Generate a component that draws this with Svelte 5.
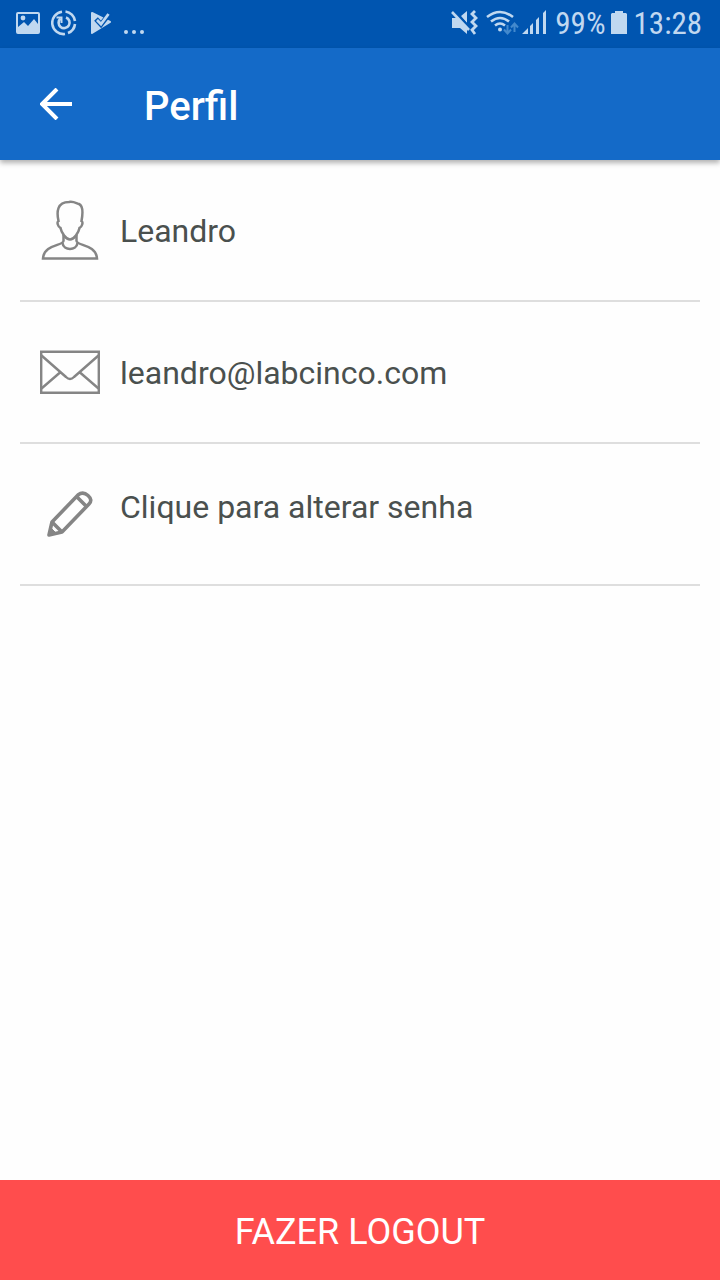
<script>
  let { name = 'Leandro', email = 'leandro@labcinco.com', battery = 99, time = '13:28', onback, onpassword, onlogout } = $props();
</script>

<div class="screen">
  <div class="status">
    <div class="group">
      <svg width="24" height="24" viewBox="0 0 24 24" fill="currentColor">
        <path fill-rule="evenodd" d="M2 1h20a2 2 0 0 1 2 2v18a2 2 0 0 1-2 2H2a2 2 0 0 1-2-2V3a2 2 0 0 1 2-2zM2 3v13l6-5 4 4 6-7 4 5V3z" />
        <circle cx="7" cy="7" r="2.400" />
      </svg>
      <svg width="26" height="26" viewBox="0 0 26 26" fill="none" stroke="currentColor" stroke-width="2.6">
        <path d="M14.500 1.500A11 11 0 0 1 24 11M24 14A11 11 0 0 1 17 23M14 24A11 11 0 0 1 11 1.700" />
        <path d="M15 7.500A5.500 5.500 0 1 1 9.500 8.500" />
        <path d="M5.500 7.500h5v5.500" stroke-width="2" />
      </svg>
      <svg class="play" width="22" height="24" viewBox="0 0 22 24">
        <path d="M1 2l18 9L1 22z" fill="currentColor" stroke="currentColor" stroke-width="2" stroke-linejoin="round" />
        <path d="M5 8l5 5.500L19 2" fill="none" stroke="#0055b0" stroke-width="5" />
        <path d="M6 9l4 4 7.500-10" fill="none" stroke="currentColor" stroke-width="2.8" />
      </svg>
      <svg class="more" width="22" height="24" viewBox="0 0 22 24" fill="currentColor">
        <circle cx="2" cy="20" r="2" /><circle cx="10" cy="20" r="2" /><circle cx="18" cy="20" r="2" />
      </svg>
    </div>
    <div class="group right">
      <svg width="28" height="26" viewBox="0 0 28 26" fill="currentColor">
        <path d="M1 8h5l10 10v6l-7-6H1zM10 6l6-5v12z" />
        <path d="M3 2l16 17" fill="none" stroke="#0055b0" stroke-width="4" />
        <path d="M1 2l17 18" fill="none" stroke="currentColor" stroke-width="2.6" />
        <path d="M24 1l-3 3 4 4-4 4 4 4-4 4 3 4" fill="none" stroke="currentColor" stroke-width="2.8" />
      </svg>
      <svg class="wifi" width="33" height="26" viewBox="0 0 33 26" fill="none" stroke="currentColor" stroke-width="2.6">
        <path d="M1 7q13-10 26 0M5 11.500q9-7 18 0M9 15.500q5-4 10 0" />
        <circle cx="14" cy="19.500" r="2" fill="currentColor" stroke="none" />
        <path d="M21.500 15v8M18 19.500l3.500 4 3.500-4M28.500 22v-8M25 17.500l3.500-4 3.500 4" stroke="#4389cd" stroke-width="2" />
      </svg>
      <svg width="26" height="26" viewBox="0 0 26 26" fill="currentColor">
        <path d="M0 24l6-6v6zM8 16l3-3v11H8zM14 10l3-3v17h-3zM21 3l3-3v24h-3z" />
      </svg>
      <span>{battery}%</span>
      <svg class="battery" width="16" height="24" viewBox="0 0 16 24" fill="currentColor">
        <path d="M4 0h8v2h3l1 1v20H0V3l1-1h3z" />
      </svg>
      <span>{time}</span>
    </div>
  </div>

  <header>
    <button type="button" class="back" aria-label="Voltar" onclick={() => onback?.()}>
      <svg width="32" height="32" viewBox="0 0 32 32" fill="none" stroke="currentColor" stroke-width="4">
        <path d="M32 16H3M17 1L2 16l15 15" />
      </svg>
    </button>
    <h1>Perfil</h1>
  </header>

  <main>
    <div class="row">
      <svg width="60" height="60" viewBox="0 0 60 60" fill="none" stroke="currentColor" stroke-width="2.5">
        <path d="M18.500 21C16.500 12 17 2 29 2C33 1 37 3.500 39 4C43.500 6 43 13 41.500 21C43.500 22 42 27 39.500 28C38.500 33 34 39.500 30 39.500S21.500 33 20.500 28C18 27 16.500 22 18.500 21z" />
        <path d="M23.500 35v6C23 46 4 44 3 58.500h54C56 44 37 46 36.500 41v-6" />
        <path d="M22.500 43c1 8 14 8 15 0" />
      </svg>
      <span>{name}</span>
    </div>
    <div class="row">
      <svg width="60" height="44" viewBox="0 0 60 44" fill="none" stroke="currentColor" stroke-width="2.4">
        <path d="M1.200 1.700h57.600v41H1.200z" />
        <path d="M1.500 5.500L26 27q4 4 8 0L58.500 5.500M1.500 38.500L20 22.500M58.500 38.500L40 22.500" />
      </svg>
      <span>{email}</span>
    </div>
    <button type="button" class="row action" onclick={() => onpassword?.()}>
      <svg width="60" height="60" viewBox="0 0 60 60" fill="none" stroke="currentColor" stroke-width="3.600" stroke-linejoin="round">
        <path d="M9 51l3-13L38 11Q43 7 48 11.500T49 20L22 48z" />
        <path d="M12.500 38.500l9 9M37 13l10 10" />
        <path d="M9 51l2-7 5 5z" fill="currentColor" stroke-width="1" />
      </svg>
      <span>Clique para alterar senha</span>
    </button>
  </main>

  <button type="button" class="logout" onclick={() => onlogout?.()}>FAZER LOGOUT</button>
</div>

<style>
  :global(body) {
    margin: 0;
  }
  .screen {
    display: flex;
    flex-direction: column;
    min-height: 100vh;
    background: #fefefe;
    color: #4a504e;
    font-family: Roboto, 'Liberation Sans', sans-serif;
    font-size: 32px;
  }
  svg {
    display: block;
    flex: none;
  }
  button {
    border: none;
    background: none;
    color: inherit;
    font: inherit;
    cursor: pointer;
  }
  .status {
    display: flex;
    justify-content: space-between;
    align-items: center;
    height: 48px;
    padding: 0 18px 0 16px;
    box-sizing: border-box;
    background: #0055b0;
    color: #c0d8f0;
    font-family: 'Roboto Condensed', Roboto, sans-serif;
    font-size: 31px;
    line-height: 48px;
  }
  .group {
    display: flex;
    align-items: center;
    gap: 11px;
  }
  .group svg {
    margin-bottom: 2px;
  }
  .group .play {
    margin-left: 3px;
  }
  .group .more {
    margin-bottom: 0;
  }
  .right {
    gap: 7px;
  }
  .group .wifi {
    margin-right: -4px;
  }
  .group .battery {
    margin-left: -2px;
  }
  header {
    display: flex;
    align-items: center;
    gap: 32px;
    height: 112px;
    background: #146ac8;
    color: #fff;
    box-shadow: 0 3px 5px rgba(0, 0, 0, 0.3);
  }
  .back {
    padding: 40px;
  }
  h1 {
    margin: 0;
    padding-top: 4px;
    font-size: 40px;
    font-weight: 500;
  }
  main {
    flex: 1;
    padding: 0 20px;
  }
  .row {
    display: flex;
    align-items: center;
    gap: 20px;
    width: 100%;
    height: 142px;
    padding: 0 20px;
    box-sizing: border-box;
    border-bottom: 2px solid #dedede;
    text-align: left;
  }
  .row svg {
    color: #858585;
  }
  .row span {
    padding-top: 2px;
  }
  .action span {
    padding-bottom: 16px;
  }
  .logout {
    height: 100px;
    padding: 4px 20px 0;
    background: #ff4d4d;
    color: #fff;
    font-size: 36px;
  }
</style>
